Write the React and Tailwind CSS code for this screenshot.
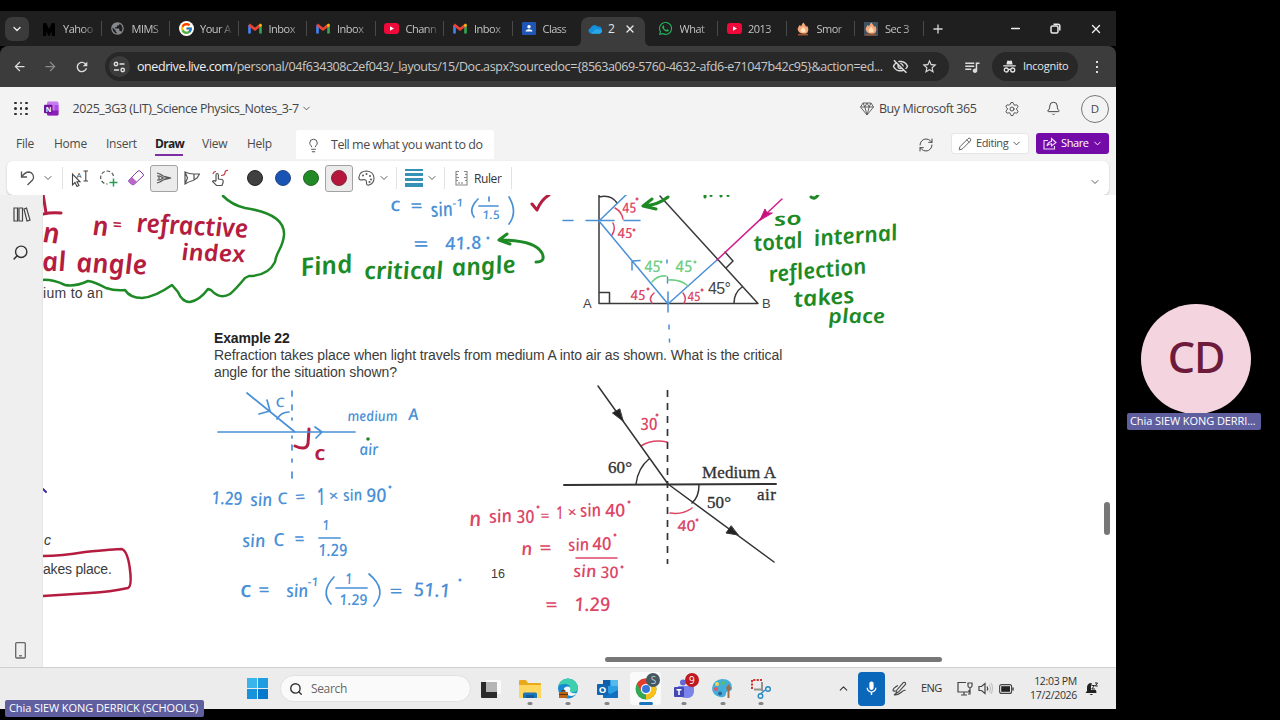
import React from "react";
import { FcGoogle } from "react-icons/fc";
import { FaWhatsapp } from "react-icons/fa";
import { MdPublic, MdOutlineVisibilityOff, MdStarOutline, MdQueueMusic, MdMic, MdRefresh, MdArrowBack, MdArrowForward } from "react-icons/md";
import { ChevronDown, ChevronUp, Minus, X, Plus, Search, Lightbulb, Bell, Settings, Pencil, RefreshCw } from "lucide-react";

const UI = "font-['Open_Sans','Noto_Sans',sans-serif]";

/* ---------- browser tabs ---------- */

const Gmail = () => (
  <svg width="14" height="11" viewBox="0 0 14 11">
    <path d="M1.5 10.5V2" stroke="#4285f4" strokeWidth="2.6" />
    <path d="M12.5 10.5V2" stroke="#34a853" strokeWidth="2.6" />
    <path d="M1 1.6 7 6.2 13 1.6" fill="none" stroke="#ea4335" strokeWidth="2.7" />
    <path d="M11.3 3.2 13.5 1.4" stroke="#fbbc04" strokeWidth="2.4" />
  </svg>
);
const Youtube = () => (
  <svg width="15" height="11" viewBox="0 0 15 11">
    <rect width="15" height="11" rx="3" fill="#f1083b" />
    <path d="M6 3.2v4.6l4-2.3z" fill="#fff" />
  </svg>
);
const Cloud = () => (
  <svg width="14" height="10" viewBox="0 0 14 10">
    <path d="M3 9.5A2.8 2.8 0 0 1 2.6 4 4 4 0 0 1 9.6 2.6 3.5 3.5 0 0 1 11.4 9.5z" fill="#1490df" />
    <path d="M3 9.7h8.4a2.3 2.3 0 0 0 1.6-4L8 5z" fill="#28a8ea" />
  </svg>
);
const Flame = ({ boxed }) => (
  <svg width="14" height="14" viewBox="0 0 14 14">
    {boxed && <rect width="14" height="14" fill="#3f5262" />}
    <path d="M2 8.500C1 6 3 4.500 3.400 3.200 4.200 3.200 4.800 3.800 5 4.400 6 3 6.200 1.500 7.500.5 8.500 2.500 9.800 3 10 4.800L11.200 4C12.500 6 12.800 8 11.500 10.500 10 12.500 3.500 12.500 2 8.500z" fill="#f5a97a" />
    <path d="M4.500 9C4.500 7 6 7 7 4.800 8.500 6.500 10 7.500 9.500 9.500 8.500 11 5.500 11 4.500 9z" fill="#ffe0b8" />
    <path d="M2 11.800h10v1.700H2z" fill="#9a532a" />
  </svg>
);
const Classroom = () => (
  <svg width="14" height="13" viewBox="0 0 14 13">
    <rect width="14" height="13" rx="1" fill="#1f56b5" />
    <circle cx="7" cy="4.800" r="1.700" fill="#fff" />
    <path d="M3.500 9.500c.3-3 6.700-3 7 0z" fill="#fff" />
  </svg>
);
const Medium = () => (
  <svg width="12" height="14" viewBox="0 0 12 14">
    <path d="M1.500 14V1.500L6 11 10.500 1.500V14" fill="none" stroke="#000" strokeWidth="3.400" />
  </svg>
);

const tabs = [
  { icon: <Medium />, title: "Yahoo" },
  { icon: <MdPublic size={15} color="#85888c" />, title: "MIMS" },
  { icon: <span className="rounded-full bg-white p-px"><FcGoogle size={13} /></span>, title: "Your A" },
  { icon: <Gmail />, title: "Inbox" },
  { icon: <Gmail />, title: "Inbox" },
  { icon: <Youtube />, title: "Chann" },
  { icon: <Gmail />, title: "Inbox" },
  { icon: <Classroom />, title: "Class" },
  { icon: <Cloud />, title: "2", active: true },
  { icon: <FaWhatsapp size={15} color="#25b45c" />, title: "What" },
  { icon: <Youtube />, title: "2013" },
  { icon: <Flame />, title: "Smor" },
  { icon: <Flame boxed />, title: "Sec 3" },
];

function Tab({ icon, title, active, last }) {
  if (active)
    return (
      <div className="relative mt-[6px] mr-[5px] flex h-[29px] w-[63.500px] shrink-0 items-center rounded-t-[8px] bg-[#3c3c3c] pb-[6px] pl-[7px]">
        <svg className="absolute -left-[6px] bottom-0" width="6" height="6" viewBox="0 0 6 6"><path d="M6 0V6H0Q6 6 6 0z" fill="#3c3c3c" /></svg>
        <svg className="absolute -right-[6px] bottom-0" width="6" height="6" viewBox="0 0 6 6"><path d="M0 0V6H6Q0 6 0 0z" fill="#3c3c3c" /></svg>
        <span className="flex w-[14px] justify-center">{icon}</span>
        <span className="ml-[6px] w-[9px] text-[12px] text-[#e4e4e4]">{title}</span>
        <X size={12} strokeWidth={2.500} color="#eee" className="ml-[7px]" />
      </div>
    );
  return (
    <div className="flex h-[35px] w-[68.5px] shrink-0 items-center">
      <span className="ml-[8px] flex w-[16px] shrink-0 justify-center">{icon}</span>
      <span className="ml-[6px] w-[32px] whitespace-nowrap pt-px text-[11px] tracking-[-0.500px] text-[#c4c4c4] [mask-image:linear-gradient(90deg,#000_60%,rgba(0,0,0,0.25)_95%)]">{title}</span>
      <span className={last ? "ml-auto h-[15px] w-px" : "ml-auto h-[15px] w-px bg-[#494949]"} />
    </div>
  );
}

function Browser() {
  return (
    <>
      <div className="flex h-[35px] shrink-0 items-center overflow-hidden bg-[#1f1f1f]">
        <div className="ml-[5px] mr-[4px] flex h-[24px] w-[24px] shrink-0 items-center justify-center rounded-[7px] bg-[#3b3b3b]">
          <ChevronDown size={12} strokeWidth={2.800} color="#e8e8e8" />
        </div>
        {tabs.map((t, i) => (
          <Tab key={i} {...t} last={i === 7} />
        ))}
        <Plus size={14} strokeWidth={2.300} color="#d6d6d6" className="ml-[7px]" />
        <div className="ml-auto mr-[13px] flex items-center gap-[28px]">
          <Minus size={13} strokeWidth={2.800} color="#eee" />
          <svg width="11" height="11" viewBox="0 0 11 11" fill="none" stroke="#e8e8e8" strokeWidth="1.500">
            <rect x="1" y="3" width="7" height="7" rx="1.500" />
            <path d="M3.500 1.200H8A1.800 1.800 0 0 1 9.800 3V7.500" />
          </svg>
          <X size={14} strokeWidth={2.400} color="#eee" />
        </div>
      </div>
      <div className="flex h-[41px] shrink-0 items-center rounded-t-[8px] bg-[#3c3c3c] text-[#dcdcdc]">
        <MdArrowBack size={15} className="ml-[12px]" />
        <MdArrowForward size={15} className="ml-[16px] text-[#8b8b8b]" />
        <MdRefresh size={16} className="ml-[16px]" />
        <div className="ml-[15px] flex h-[29px] w-[844px] items-center rounded-full bg-[#282828] pl-[4px]">
          <span className="flex h-[21px] w-[21px] items-center justify-center rounded-full bg-[#3c3c3c]">
            <svg width="13" height="12" viewBox="0 0 13 12" fill="none" stroke="#e0e0e0" strokeWidth="1.400">
              <circle cx="3" cy="3" r="1.700" />
              <path d="M6.500 3H11.500M1 9H6" />
              <circle cx="9.700" cy="9" r="1.700" />
            </svg>
          </span>
          <span className="ml-[7px] w-[746px] whitespace-nowrap pt-px text-[12.500px] tracking-[-0.420px] text-[#c9c9c9]">
            <span className="text-[#f0f0f0]">onedrive.live.com</span>/personal/04f634308c2ef043/_layouts/15/Doc.aspx?sourcedoc={"{"}8563a069-5760-4632-afd6-e71047b42c95{"}"}&amp;action=ed...
          </span>
          <MdOutlineVisibilityOff size={17} className="ml-[9px] shrink-0" />
          <MdStarOutline size={17} className="ml-[12px] shrink-0" />
        </div>
        <MdQueueMusic size={18} className="ml-[14px]" />
        <div className="ml-[11px] flex h-[29px] w-[86px] items-center rounded-full bg-[#282828] pl-[11px]">
          <svg width="13" height="13" viewBox="0 0 13 13">
            <path d="M3.400 4.500 4.200 1Q4.400.4 5 .6L6.500 1 8 .6Q8.600.4 8.800 1L9.600 4.500z" fill="#e6e6e6" />
            <path d="M.3 5.800H12.700M5.300 9.800Q6.500 9 7.700 9.800" stroke="#e6e6e6" strokeWidth="1.300" fill="none" />
            <circle cx="3.300" cy="10" r="2" fill="none" stroke="#e6e6e6" strokeWidth="1.300" />
            <circle cx="9.700" cy="10" r="2" fill="none" stroke="#e6e6e6" strokeWidth="1.300" />
          </svg>
          <span className="ml-[7px] text-[11px] tracking-[-0.250px] text-[#e6e6e6]">Incognito</span>
        </div>
        <div className="ml-[18px] flex flex-col gap-[3px]">
          <span className="h-[2px] w-[2px] bg-[#ddd]" />
          <span className="h-[2px] w-[2px] bg-[#ddd]" />
          <span className="h-[2px] w-[2px] bg-[#ddd]" />
        </div>
      </div>
    </>
  );
}

/* ---------- OneNote header ---------- */

function TitleRow() {
  return (
    <div className="flex h-[43px] shrink-0 items-center text-[#454545]">
      <div className="ml-[14px] grid grid-cols-3 gap-[3px]">
        {Array.from({ length: 9 }, (_, i) => (
          <span key={i} className="h-[2.500px] w-[2.500px] rounded-full bg-[#2c2c2c]" />
        ))}
      </div>
      <svg className="ml-[16px]" width="15" height="15" viewBox="0 0 15 15">
        <rect x="3" y=".5" width="11.500" height="14" rx="1.500" fill="#c67bef" />
        <path d="M10.500 4H14.500V10H10.500z" fill="#ae4be6" />
        <path d="M3 9.500H14.500V13a1.500 1.500 0 0 1-1.500 1.500H4.500A1.500 1.500 0 0 1 3 13z" fill="#8a1fb5" />
        <rect x="0" y="3.800" width="8.500" height="8.500" rx="1" fill="#70139c" />
        <text x="1.700" y="10.700" fontSize="7" fontWeight="700" fill="#fff" fontFamily="Open Sans">N</text>
      </svg>
      <span className="ml-[14px] w-[228px] whitespace-nowrap pt-[2px] text-[12.500px] tracking-[-0.430px]">2025_3G3 (LIT)_Science Physics_Notes_3-7</span>
      <ChevronDown size={11} className="ml-[0px]" strokeWidth={1.800} />
      <div className="ml-auto mr-[7px] flex items-center">
        <svg width="14" height="14" viewBox="0 0 14 14" fill="none" stroke="#555" strokeWidth=".9">
          <path d="M3 1H11L13.500 5 7 13 .5 5zM.5 5H13.500M4.800 5 7 13 9.200 5 7 1zM3 1 4.800 5M11 1 9.200 5" />
        </svg>
        <span className="ml-[5px] w-[98px] whitespace-nowrap pt-[2px] text-[12.500px] tracking-[-0.450px]">Buy Microsoft 365</span>
        <Settings size={16} strokeWidth={1.400} className="ml-[27px]" />
        <Bell size={15} strokeWidth={1.600} className="ml-[26px]" />
        <span className="ml-[20px] flex h-[28px] w-[28px] items-center justify-center rounded-full border border-[#777] text-[11.500px]">D</span>
      </div>
    </div>
  );
}

function MenuRow() {
  return (
    <div className="flex h-[31px] shrink-0 text-[12px] text-[#4a4a4a]">
      <nav className="flex h-[26px] items-center whitespace-nowrap pl-[16px] pt-px tracking-[-0.250px]">
        <span className="w-[38px]">File</span>
        <span className="w-[52px]">Home</span>
        <span className="w-[49px]">Insert</span>
        <span className="flex h-[25px] w-[28px] items-center border-b-2 border-[#7b2fa0] pt-[2px] font-bold tracking-[-0.700px] text-[#222]">Draw</span>
        <span className="ml-[19px] w-[45px]">View</span>
        <span className="w-[49px]">Help</span>
      </nav>
      <div className="flex h-[29px] w-[198px] items-center rounded-t-[3px] bg-white pl-[10px] pt-px">
        <Lightbulb size={15} strokeWidth={1.500} />
        <span className="ml-[10px] whitespace-nowrap pt-px text-[12.500px] tracking-[-0.480px]">Tell me what you want to do</span>
      </div>
      <div className="ml-auto mr-[7px] flex">
        <RefreshCw size={16} strokeWidth={1.500} className="mt-[7px]" />
        <div className="ml-[17px] mt-[3px] flex h-[21px] w-[78px] items-center rounded-[3px] border border-[#e6e6e6] bg-white pl-[6px]">
          <Pencil size={14} strokeWidth={1.500} />
          <span className="ml-[4px] text-[11px] tracking-[-0.400px]">Editing</span>
          <ChevronDown size={11} className="ml-[3px]" />
        </div>
        <div className="ml-[7px] mt-[3px] flex h-[21px] w-[73px] items-center rounded-[3px] bg-[#720ba7] pl-[7px] text-white">
          <svg width="14" height="13" viewBox="0 0 14 13" fill="none" stroke="#f0dcfa" strokeWidth="1.100">
            <path d="M5 3.500H1V12H11.500V9M4 9Q4.500 5 8.500 4.500V1.500L13 5.500 8.500 9V6.800Q5.500 6.800 4 9z" />
          </svg>
          <span className="ml-[4px] text-[11px] tracking-[-0.400px]">Share</span>
          <ChevronDown size={11} className="ml-[3px]" />
        </div>
      </div>
    </div>
  );
}

const Sep = () => <span className="h-[22px] w-px shrink-0 bg-[#e2e2e2]" />;
const Down = () => <ChevronDown size={12} strokeWidth={1.900} color="#555" className="shrink-0" />;

const Nib = ({ wide }) => (
  <svg width="16" height="14" viewBox="0 0 16 14" fill="none" stroke="#555" strokeWidth="1.200">
    {wide ? (
      <path d="M1 1Q5 3 10 3H15.500L13 7 9 9.500Q5 10.500 1 13zM1 1 3.500 7 1 13M10 3V9" />
    ) : (
      <path d="M1 2Q5 3 7 5L15 7 7 9Q5 11 1 12M1 5H4L7 7H15M1 9H4L7 7M3 5V9" />
    )}
  </svg>
);

function Ribbon() {
  return (
    <div className="mx-[7px] flex h-[34px] shrink-0 items-center rounded-[6px] bg-white text-[#444] shadow-[0_1px_2px_rgba(0,0,0,0.22)]">
      <svg className="ml-[13px]" width="16" height="16" viewBox="0 0 16 16" fill="none" stroke="#555" strokeWidth="1.300">
        <path d="M1.500 1.500V7H7M1.500 7Q5 2 9 2A5 5 0 0 1 12.500 10L7.500 15" />
      </svg>
      <span className="ml-[6px] mr-[8px]"><Down /></span>
      <Sep />
      <svg className="ml-[8px]" width="18" height="17" viewBox="0 0 18 17" fill="none" stroke="#444" strokeWidth="1.100">
        <path d="M1.500 4V15L4 12.500 6 16.500 8 15.500 6 11.800H9z" />
        <path d="M12.500 1H17M14.800 1V11M12.500 11H17" />
        <text x="5.500" y="7.500" fontSize="8" fill="#444" stroke="none" fontFamily="Open Sans">A</text>
      </svg>
      <svg className="ml-[11px]" width="18" height="17" viewBox="0 0 18 17" fill="none" strokeWidth="1.200">
        <path d="M13.500 6A6.500 6.500 0 1 0 7.500 14" stroke="#555" strokeDasharray="3.500 2" />
        <path d="M13.500 8.500V16.500M9.500 12.500H17.500" stroke="#2e9c53" strokeWidth="1.500" />
      </svg>
      <svg className="ml-[10px]" width="17" height="16" viewBox="0 0 17 16">
        <path d="M1 10 10 1Q11 .3 12 1L15 4Q16 5 15 6L6 14.500Q5 15 4 14.500L1 12Q.3 11 1 10z" fill="#fff" stroke="#8a3fa8" />
        <path d="M1 10 4 7 9 12 6 14.500Q5 15 4 14.500L1 12Q.3 11 1 10z" fill="#b968c7" />
      </svg>
      <span className="ml-[5px] flex h-[27px] w-[28px] items-center justify-center rounded-[3px] border border-[#a2a2a2] bg-[#ebebeb]"><Nib /></span>
      <span className="ml-[6px]"><Nib wide /></span>
      <svg className="ml-[11px]" width="18" height="18" viewBox="0 0 18 18" fill="none" stroke="#555" strokeWidth="1.200">
        <path d="M5 12V6Q5 4.500 6.200 4.500T7.400 6V10L11 10.500Q12.500 11 12.200 13L11 16.500H5.500L1.500 12.500Q2.500 10.800 5 12.500" />
        <path d="M2 5Q2.500 2.500 5 2.500M10 6.500Q14 6.500 14 3.500 14.500 1 17 1.500" stroke="#c0393f" />
      </svg>
      <span className="ml-[8px]"><Sep /></span>
      <span className="ml-[10px] h-[16px] w-[16px] rounded-full border border-[#222] bg-[#404040]" />
      <span className="ml-[12px] h-[16px] w-[16px] rounded-full border border-[#264985] bg-[#1954b4]" />
      <span className="ml-[12px] h-[16px] w-[16px] rounded-full border border-[#296429] bg-[#218a24]" />
      <span className="ml-[6px] flex h-[27px] w-[28px] items-center justify-center rounded-[3px] border border-[#a2a2a2] bg-[#ebebeb]">
        <span className="h-[16px] w-[16px] rounded-full border border-[#842540] bg-[#b5173c]" />
      </span>
      <svg className="ml-[5px]" width="17" height="16" viewBox="0 0 17 16" fill="none" stroke="#555" strokeWidth="1.100">
        <path d="M1 7Q2 1 8.500 1 15.500 1.500 16 8 16 13.500 11 15 8.500 15.500 8.500 13.500 9 10 6.500 9.500 4 10 2.500 10 .5 9.500 1 7z" />
        <g fill="#555" stroke="none">
          <circle cx="5" cy="5.500" r="1" /><circle cx="8.500" cy="4" r="1" /><circle cx="12" cy="6" r="1" /><circle cx="13" cy="9.500" r="1" /><circle cx="11.500" cy="12" r="1" />
        </g>
      </svg>
      <span className="ml-[3px] mr-[6px]"><Down /></span>
      <Sep />
      <span className="ml-[8px] flex w-[18px] flex-col gap-[2px]">
        <span className="h-[2px] bg-[#3591b5]" />
        <span className="h-[3px] bg-[#3591b5]" />
        <span className="h-[3.500px] bg-[#3591b5]" />
        <span className="h-[4px] bg-[#3591b5]" />
      </span>
      <span className="ml-[3px] mr-[6px]"><Down /></span>
      <Sep />
      <svg className="ml-[10px]" width="13" height="16" viewBox="0 0 13 16" fill="none" stroke="#888" strokeWidth="1.100">
        <path d="M1 1V15H12V1M1 1.500H4M1 4.500H3M1 7.500H4M1 10.500H3M12 1.500H9M12 4.500H10M12 7.500H9M12 10.500H10M4 14V12M7 14V12" />
      </svg>
      <span className="ml-[6px] mr-[8px] w-[29px] pt-[2px] text-[12px] tracking-[-0.400px] text-[#333]">Ruler</span>
      <Sep />
      <span className="ml-auto mr-[8px] mt-[7px]"><Down /></span>
    </div>
  );
}

/* ---------- notebook page ---------- */

const BLUE = "#4a90d6";
const RED = "#dc4566";
const CRIMSON = "#b41c40";
const GREEN = "#1e8a26";
const LIGHTGREEN = "#6fce84";

// text, x, baseline, width, font size, rotation
const ink = [
  { color: CRIMSON, weight: 600, items: [
    ["n", 43, 242, 17, 28, 6], ["n", 93, 235, 16, 27, 4], ["=", 113, 230, 9, 16, 4], ["refractive", 137, 232, 112, 26, 3],
    ["index", 182, 260, 64, 23, 2], ["al", 43, 271, 24, 27, 0], ["angle", 77, 272, 71, 27, 2], ["c", 315, 460, 11, 20, 0],
  ] },
  { color: GREEN, weight: 600, items: [
    ["Find", 302, 276, 52, 25, -4], ["critical", 365, 279, 79, 24, 0], ["angle", 453, 276, 64, 24, -3],
    ["so", 775, 226, 28, 18, -4], ["total", 755, 251, 49, 22, -4], ["internal", 815, 246, 84, 22, -4],
    ["reflection", 770, 282, 98, 22, -5], ["takes", 795, 307, 61, 22, -4], ["place", 829, 323, 57, 20, 0],
  ] },
  { color: BLUE, weight: 500, items: [
    ["c", 391, 211, 10, 19, 0], ["=", 411, 212, 12, 18, 0], ["sin", 432, 217, 22, 20, -4], ["-1", 453, 207, 11, 11, -3],
    ["1.5", 483, 219, 17, 12, 0], ["=", 414, 251, 15, 20, 0], ["41.8", 446, 250, 36, 18, -2],
    ["C", 276, 407, 9, 13, 0], ["medium", 348, 421, 50, 14, 0], ["A", 409, 420, 10, 16, 0], ["air", 360, 455, 19, 16, 0],
    ["1.29", 212, 504, 31, 18, 2], ["sin", 251, 506, 22, 18, 0], ["C", 278, 504, 10, 16, 0], ["=", 296, 503, 10, 17, -3],
    ["1", 318, 505, 8, 24, 0], ["×", 329, 501, 10, 15, 0], ["sin", 344, 501, 19, 16, -3], ["90", 367, 502, 20, 19, 0],
    ["sin", 243, 547, 23, 18, 0], ["C", 274, 546, 11, 18, 0], ["=", 295, 545, 10, 18, 0], ["1", 323, 530, 7, 14, 0], ["1.29", 319, 556, 29, 17, 0],
    ["c", 241, 597, 11, 22, 0], ["=", 259, 596, 11, 18, 0], ["sin", 287, 597, 22, 18, 0], ["-1", 308, 586, 11, 12, 0],
    ["1", 346, 584, 7, 15, 0], ["1.29", 340, 605, 28, 15, 0], ["=", 390, 597, 13, 17, 0], ["51.1", 414, 596, 37, 19, 2],
  ] },
  { color: RED, weight: 500, items: [
    ["n", 470, 526, 12, 21, 0], ["sin", 490, 523, 23, 18, -3], ["30", 517, 523, 18, 18, 0], ["=", 541, 521, 9, 15, 0],
    ["1", 557, 519, 7, 18, 0], ["×", 568, 517, 9, 14, 0], ["sin", 581, 517, 21, 18, -3], ["40", 606, 517, 20, 18, -2],
    ["n", 522, 555, 11, 18, 0], ["=", 540, 554, 12, 18, 0], ["sin", 569, 551, 21, 17, -2], ["40", 593, 550, 19, 18, 0],
    ["sin", 574, 577, 23, 17, 0], ["30", 601, 578, 18, 16, 0], ["=", 546, 611, 12, 18, 0], ["1.29", 575, 611, 36, 19, 0],
    ["30", 641, 430, 17, 17, 0], ["40", 678, 531, 18, 15, 0],
    ["45", 623, 213, 14, 14, -3], ["45", 618, 238, 15, 14, 0], ["45", 631, 300, 15, 14, 0], ["45", 688, 301, 13, 13, 0],
  ] },
  { color: LIGHTGREEN, weight: 500, items: [["45", 645, 272, 16, 16, 0], ["45", 676, 272, 17, 16, 0]] },
];

const degrees = [
  [488, 238, BLUE], [390, 487, BLUE], [460, 580, BLUE],
  [538, 507, RED], [629, 502, RED], [615, 535, RED], [622, 567, RED], [657, 415, RED], [697, 520, RED],
  [637, 199, RED], [634, 230, RED], [648, 289, RED], [702, 290, RED], [661, 262, LIGHTGREEN], [695, 262, LIGHTGREEN],
];

function Handwriting() {
  return (
    <g fontFamily="Noto Sans, sans-serif" fontStyle="italic">
      {ink.map((set, k) => (
        <g key={k} fill={set.color} fontWeight={set.weight}>
          {set.items.map(([t, x, y, w, size, rot], i) => (
            <text key={i} transform={`translate(${x} ${y}) rotate(${rot}) skewX(8)`} fontSize={size} textLength={w} lengthAdjust="spacingAndGlyphs">{t}</text>
          ))}
        </g>
      ))}
      {degrees.map(([x, y, c], i) => (
        <circle key={i} cx={x} cy={y} r="1.100" fill={c} stroke={c} strokeWidth="1" />
      ))}
    </g>
  );
}

function Drawings() {
  return (
    <g fill="none" strokeLinecap="round" strokeLinejoin="round">
      {/* prism */}
      <g stroke="#3a3a3a" strokeWidth="1.500">
        <path d="M599 190V303.500H758L660 196M599 292.500H609.500V303M599 197Q611 194 617 203M734 303Q734 293 742 287M725 252 733 261 726 268" />
      </g>
      <path d="M717 260 668 304 599 221 627 194M632 270V261L640 260.500" stroke={BLUE} strokeWidth="1.500" />
      <path d="M563 220.500H573M586 220.500H614M624 220.500H640M667 260V263M667.500 277V283M668 292V312M669 325V329M669.500 339V342" stroke={BLUE} strokeWidth="1.500" />
      <path d="M782 199 717 260" stroke="#d1208c" strokeWidth="1.500" />
      <path d="M760 220 765 209 767 213 772 213z" fill="#c8107f" stroke="#c8107f" />
      <path d="M652 282Q658 275 666 276M668 280Q680 279 688 286" stroke={LIGHTGREEN} strokeWidth="1.500" />
      <path d="M654 293Q648 298 652 303M683 293Q687 298 684 303M615 208Q622 212 623 219M613 223Q616 229 612 235" stroke={RED} strokeWidth="1.500" />

      {/* thick pen strokes */}
      <g stroke={GREEN} strokeWidth="3">
        <path d="M223 196Q232 205 245 208C265 211 285 218 284 235C283 248 276 252 275 262C270 272 262 276 249 276L245 278Q235 290 230 294Q220 300 211 290L208 289Q200 300 190 302Q182 302 178 292L172 285Q155 297 142 298Q130 298 125 290Q115 291 106 288Q95 282 88 281Q75 287 65 285Q52 279 41 280" strokeWidth="2.500" />
        <path d="M536 262Q546 262 542 253Q535 240 500 240M507 234 499 240 510 244" />
        <path d="M652 199 643 206 656 209M644 206Q658 205 668 197M705 194V197M711 194V195.500M721 194V196M728 194V195.500M811 197Q815 200 818 195" />
      </g>
      <circle cx="368" cy="439" r="1.800" fill={GREEN} />
      <g stroke={CRIMSON} strokeWidth="3">
        <path d="M532 204 537 210Q541 200 549 195M43 194 46 213M43 214Q52 212 61 213M309 429 308 444Q306 451 295 446" />
        <path d="M41 556Q60 556 85 552Q115 549 122 549Q128 552 130 570Q132 586 128 588Q110 592 90 593L41 596" strokeWidth="2.500" />
      </g>
      <path d="M43 489 46 492" stroke="#3d2fa8" strokeWidth="2" />

      {/* blue refraction sketch */}
      <g stroke={BLUE} strokeWidth="1.700">
        <path d="M218 432H355M247 393 295 432M267 400 270 411 259 414M315 427 322 432 316 438M277 419Q281 412 289 412" />
        <path d="M292 391V396M292 405V410M292 418V420M292 436V438M292 445V450M292 459V462M292 472V478" />
        <path d="M478 199Q468 209 474 217M509 197Q518 212 509 224M479 206H498M489 197V201" />
        <path d="M319 538H340M336 588H367M334 577Q320 592 331 604M369 574Q388 590 374 606" />
      </g>
      <path d="M576 558 617 558M641 446Q652 439 667 442M670 513Q683 515 692 508" stroke={RED} strokeWidth="1.500" />

      {/* printed refraction diagram */}
      <g stroke="#333">
        <path d="M564 485 776 484" strokeWidth="2" />
        <path d="M598 386 668 484 774 562M636 484Q638 468 649 459M699 485Q699 497 692 503" strokeWidth="1.500" />
        <path d="M667.500 390V564" strokeWidth="1.700" strokeDasharray="7 6" strokeLinecap="butt" />
        <path d="M623 421 612.500 413 619.500 409zM738 535 726 533 731 526z" fill="#222" strokeWidth="1" />
      </g>
      <g fill="#333" stroke="#333" strokeWidth=".35" fontFamily="Liberation Serif, serif" fontSize="17">
        <text x="608" y="472.500" textLength="24">60°</text>
        <text x="702" y="478" textLength="74">Medium A</text>
        <text x="757" y="500" textLength="19">air</text>
        <text x="707" y="508" textLength="24">50°</text>
      </g>
      <g fill="#444" fontFamily="Liberation Sans, sans-serif">
        <text x="708" y="294" fontSize="16" textLength="23">45°</text>
        <text x="583" y="308" fontSize="13">A</text>
        <text x="762" y="308" fontSize="13">B</text>
      </g>
    </g>
  );
}

const rail = "ml-[13px]";

function Notebook() {
  return (
    <div className="flex min-h-0 flex-1">
      <aside className="flex w-[43px] shrink-0 flex-col border-r border-[#e6e6e6] bg-[#efefef] pb-[8px] pt-[12px]">
        <svg className={rail} width="18" height="15" viewBox="0 0 18 15" fill="none" stroke="#444" strokeWidth="1.200">
          <path d="M1 1H4.500V14H1zM6 1H9.500V14H6zM11 2 13.500 1 17 13 14 14z" />
        </svg>
        <Search size={17} strokeWidth={2} color="#333" className="ml-[12px] mt-[22px] -scale-x-100" />
        <svg className="ml-[15px] mt-auto" width="11" height="17" viewBox="0 0 11 17" fill="none" stroke="#666" strokeWidth="1.300">
          <rect x=".7" y=".7" width="9.600" height="15.300" rx="1" />
          <path d="M4 13.800H7" />
        </svg>
      </aside>
      <main className="relative flex-1 overflow-hidden bg-white font-['Liberation_Sans',Arial,sans-serif] text-[14px] leading-[16px] text-[#3c3c3c]">
        <p className="absolute left-0 top-[90px] whitespace-nowrap tracking-[0.300px]">ium to an</p>
        <p className="absolute left-[171px] top-[135px] whitespace-nowrap font-bold tracking-[-0.150px] text-[#222]">Example 22</p>
        <p className="absolute left-[171px] top-[152px] w-[600px] whitespace-pre leading-[17px] tracking-[-0.105px]">{"Refraction takes place when light travels from medium A into air as shown. What is the critical\nangle for the situation shown?"}</p>
        <p className="absolute left-[1px] top-[337px] text-[14px] italic">c</p>
        <p className="absolute left-0 top-[366px] whitespace-nowrap tracking-[-0.200px]">akes place.</p>
        <p className="absolute left-[448px] top-[371px] text-[12.500px]">16</p>
        <svg className="absolute left-0 top-0" width="1073" height="472" viewBox="43 195 1073 472">
          <Drawings />
          <Handwriting />
        </svg>
        <span className="absolute left-[1061px] top-[307px] h-[33px] w-[6px] rounded-full bg-[#777]" />
        <span className="absolute left-[562px] top-[462px] h-[5px] w-[337px] rounded-full bg-[#777]" />
      </main>
    </div>
  );
}

/* ---------- taskbar ---------- */

const TaskView = () => (
  <svg width="20" height="20" viewBox="0 0 20 20">
    <rect x="5" y="1" width="15" height="14" rx="1" fill="#fafafa" />
    <path d="M0 3H5V13H16V19H1Q0 19 0 18z" fill="#2b2b2b" />
    <rect x="5" y="3" width="11" height="10" fill="#b5b5b5" />
  </svg>
);
const Folder = () => (
  <svg width="22" height="20" viewBox="0 0 22 20">
    <path d="M0 2Q0 1 1 1H7L9 4H21Q22 4 22 5V19H0z" fill="#e9a91c" />
    <path d="M0 6H22V18Q22 19 21 19H1Q0 19 0 18z" fill="#ffd75e" />
    <path d="M4 19V15Q4 13.500 5.500 13.500H16.500Q18 13.500 18 15V19z" fill="#1976b8" />
    <path d="M7 16H15V19H7z" fill="#0f5c97" />
  </svg>
);
const Edge = () => (
  <svg width="22" height="21" viewBox="0 0 22 21">
    <circle cx="11" cy="10.500" r="10" fill="#1689d2" />
    <path d="M1.200 8Q3.500.500 11 .500 20 1 21 10 21 14 16 14.500 12 14 13 11 13.500 6.500 9 6 4 5.500 1.200 8z" fill="#3dcfae" />
    <path d="M7 10Q7 17 14 18 18 18 20 15 16 16 13.500 14 12.500 12.500 13.300 10.500 12.500 7 7 10z" fill="#f0f7fa" />
    <path d="M2 14H11V20H2z" fill="#b8651c" />
    <path d="M2 16.500H11M5 14V12.500H8V14" stroke="#613006" fill="none" />
  </svg>
);
const Outlook = () => (
  <svg width="21" height="20" viewBox="0 0 21 20">
    <path d="M7 1H20Q21 1 21 2V19H6V2z" fill="#2c9fe4" />
    <path d="M6 1H13V7H6z" fill="#135da8" /><path d="M14 1H21V7H14z" fill="#55b9ee" />
    <path d="M6 11 13.500 15 21 11V18Q21 19 20 19H7Q6 19 6 18z" fill="#1270c0" />
    <rect y="5" width="11" height="11" rx="1" fill="#1263b0" />
    <text x="1.800" y="14" fontSize="9.500" fontWeight="700" fill="#fff" fontFamily="Open Sans">O</text>
  </svg>
);
const Chrome = () => (
  <svg width="22" height="22" viewBox="0 0 22 22">
    <circle cx="11" cy="11" r="10.500" fill="#34a853" />
    <path d="M11 11 1.900 5.800A10.500 10.500 0 0 1 20.100 5.800z" fill="#e33b2e" />
    <path d="M11 11 20.100 5.800A10.500 10.500 0 0 1 11 21.500z" fill="#fbc116" />
    <path d="M1.900 5.800 6.500 13.500 11 6z" fill="#e33b2e" />
    <circle cx="11" cy="11" r="5.200" fill="#fff" /><circle cx="11" cy="11" r="4" fill="#3577dc" />
  </svg>
);
const Teams = () => (
  <svg width="21" height="20" viewBox="0 0 21 20">
    <circle cx="9" cy="3.500" r="3" fill="#6369d6" />
    <path d="M4 7H20V13Q19 19 13 19 5 19 4 13z" fill="#7b83eb" />
    <rect y="8" width="10" height="10" rx="1" fill="#4448b4" />
    <path d="M2.500 10.800H7.500M5 10.800V16" stroke="#fff" strokeWidth="1.500" />
  </svg>
);
const Paint = () => (
  <svg width="21" height="20" viewBox="0 0 21 20">
    <path d="M10 0Q20 0 20 9 20 12 17 12 14 12 14 15 13 19 8 18 0 16 0 9 1 1 10 0z" fill="#43aeda" />
    <circle cx="5" cy="5" r="2" fill="#f0d450" /><circle cx="11" cy="4" r="2" fill="#55c064" /><circle cx="4" cy="10" r="2" fill="#e7555e" /><circle cx="8" cy="14.500" r="2" fill="#30629a" />
    <path d="M14 9 16.500 5 19 9 17.500 12V19H15.500V12z" fill="#a46a46" />
  </svg>
);
const Snip = () => (
  <svg width="20" height="20" viewBox="0 0 20 20" fill="none">
    <path d="M1 10V1H11" stroke="#ce3434" strokeWidth="2" strokeDasharray="2.200 1.200" />
    <path d="M11 3V12M3 10.500H12" stroke="#929292" strokeWidth="2" />
    <circle cx="17" cy="10" r="2.300" stroke="#2789c1" strokeWidth="1.400" /><circle cx="9.500" cy="17" r="2.300" stroke="#2789c1" strokeWidth="1.400" />
    <path d="M10 14.500 14 11" stroke="#2789c1" strokeWidth="1.500" />
  </svg>
);

const apps = [
  { icon: <TaskView /> },
  { icon: <Folder />, dot: true },
  { icon: <Edge />, dot: true },
  { icon: <Outlook />, dot: true },
  { icon: <Chrome />, active: true, badge: "S", badgeClass: "bg-[#465962] text-[#b9cdd6]" },
  { icon: <Teams />, dot: true, badge: "9", badgeClass: "bg-[#c2181f] text-white" },
  { icon: <Paint />, dot: true },
  { icon: <Snip />, dot: true },
];

function Taskbar() {
  return (
    <div className="flex h-[42px] shrink-0 items-center border-t border-[#cfcfcf] bg-[#ececec] text-[#333]">
      <div className="ml-[247px] grid h-[21px] w-[21px] grid-cols-2 gap-[1px]">
        <span className="bg-[#39b5ec]" /><span className="bg-[#209ce0]" /><span className="bg-[#1793dc]" /><span className="bg-[#0878cc]" />
      </div>
      <div className="ml-[12px] flex h-[27px] w-[191px] items-center rounded-full border border-[#e0e0e0] bg-[#fafafa] pl-[8px]">
        <Search size={14} strokeWidth={2.400} />
        <span className="ml-[8px] text-[12px] tracking-[-0.350px] text-[#666]">Search</span>
      </div>
      <div className="ml-[1px] flex">
        {apps.map((a, i) => (
          <div key={i} className="relative flex h-[41px] w-[38.600px] items-center justify-center">
            <div className={a.active ? "flex h-[33px] w-[31px] items-center justify-center rounded-[4px] bg-[#fafafa]" : "flex h-[33px] w-[31px] items-center justify-center"}>{a.icon}</div>
            {a.dot && <span className="absolute bottom-[4px] left-1/2 h-[3px] w-[5px] -translate-x-1/2 rounded-full bg-[#858585]" />}
            {a.active && <span className="absolute bottom-[4px] left-1/2 h-[3px] w-[14px] -translate-x-1/2 rounded-full bg-[#1a75bd]" />}
            {a.badge && <span className={`absolute left-[20px] top-[5px] flex h-[14px] w-[14px] items-center justify-center rounded-full text-[10px] ${a.badgeClass}`}>{a.badge}</span>}
          </div>
        ))}
      </div>
      <div className="ml-auto mr-[18px] flex items-center">
        <ChevronUp size={13} />
        <span className="ml-[8px] flex h-[34px] w-[27px] items-center justify-center rounded-[4px] bg-[#0b67b9]"><MdMic size={17} color="#fff" /></span>
        <svg className="ml-[7px]" width="15" height="15" viewBox="0 0 15 15" fill="none" stroke="#444" strokeWidth="1.100">
          <path d="M4.500 9.500 11 1.800Q12.500.5 13.500 2 14 3 13 4L6.500 11 4 12zM6 4.500Q1 7 1 9.500 1.500 11 3.500 9.500M5 12Q1 14 3 14 6 14 9 11.500 12.500 8.500 13.500 9.500" />
        </svg>
        <span className="ml-[14px] w-[22px] text-[11px] tracking-[-0.600px]">ENG</span>
        <svg className="ml-[14px]" width="16" height="15" viewBox="0 0 16 15" fill="none" stroke="#444" strokeWidth="1.200">
          <path d="M9 1.500H1V11H12V9M4 14H10M7 11V14M11 2H15V5Q15 6.500 13 6.500 11 6.500 11 5zM13 6.500V13H11" />
        </svg>
        <svg className="ml-[5px]" width="15" height="13" viewBox="0 0 15 13" fill="none" stroke="#444" strokeWidth="1.200">
          <path d="M1 4.500H3.500L7 1.500V11.500L3.500 8.500H1zM9 4.500Q10.500 6.500 9 8.500" />
          <path d="M11 2.500Q14 6.500 11 10.500M13 1Q16 6 13 12" stroke="#c2c2c2" />
        </svg>
        <svg className="ml-[6px]" width="15" height="10" viewBox="0 0 15 10">
          <rect x=".6" y=".6" width="12" height="8.800" rx="2" fill="none" stroke="#444" strokeWidth="1.100" />
          <rect x="2.200" y="2.200" width="8.800" height="5.600" fill="#222" /><path d="M14 3.500V6.500" stroke="#444" strokeWidth="1.500" />
        </svg>
        <div className="ml-[12px] w-[51px] whitespace-nowrap text-right text-[10.500px] leading-[14px] tracking-[-0.300px]">
          <div className="-mt-[2px]">12:03 PM</div>
          <div>17/2/2026</div>
        </div>
        <svg className="ml-[8px]" width="13" height="14" viewBox="0 0 13 14">
          <path d="M.5 11 2 9V5Q2.500 1 6.500 1L7 2 6 3V8H11L11.500 11zM4.500 12H8Q6.500 14 4.500 12z" fill="#222" />
          <path d="M6.500 3.500H9.500L6.800 7H10M10 1H12.500L10.300 4H12.800" stroke="#222" fill="none" />
        </svg>
      </div>
    </div>
  );
}

export default function App() {
  return (
    <div className={`relative flex h-[720px] w-[1280px] overflow-hidden bg-black ${UI}`}>
      <section className="flex w-[1116px] flex-col pb-[11px] pt-[11px]">
        <Browser />
        <div className="flex min-h-0 flex-1 flex-col bg-[#f3f3f3]">
          <TitleRow />
          <MenuRow />
          <Ribbon />
          <Notebook />
        </div>
        <Taskbar />
      </section>
      <section className="flex flex-1 flex-col items-start pt-[304px]">
        <div className="ml-[25px] flex h-[110px] w-[110px] shrink-0 items-center justify-center rounded-full bg-[#f4d5df] pb-[3px] font-['Noto_Sans','Open_Sans',sans-serif] text-[43px] font-medium tracking-[-1px] text-[#6d1b3b]">CD</div>
        <div className="ml-[11px] -mt-px flex h-[17px] w-[134px] items-center whitespace-nowrap rounded-[2px] bg-[#5f5f9f] pl-[3px] text-[11px] tracking-[-0.080px] text-white">Chia SIEW KONG DERRI...</div>
      </section>
      <div className="absolute left-[5px] top-[700px] flex h-[17px] w-[199px] items-center whitespace-nowrap rounded-[2px] bg-[#5f5f9f] pl-[4px] text-[11px] tracking-[-0.080px] text-white">Chia SIEW KONG DERRICK (SCHOOLS)</div>
    </div>
  );
}
